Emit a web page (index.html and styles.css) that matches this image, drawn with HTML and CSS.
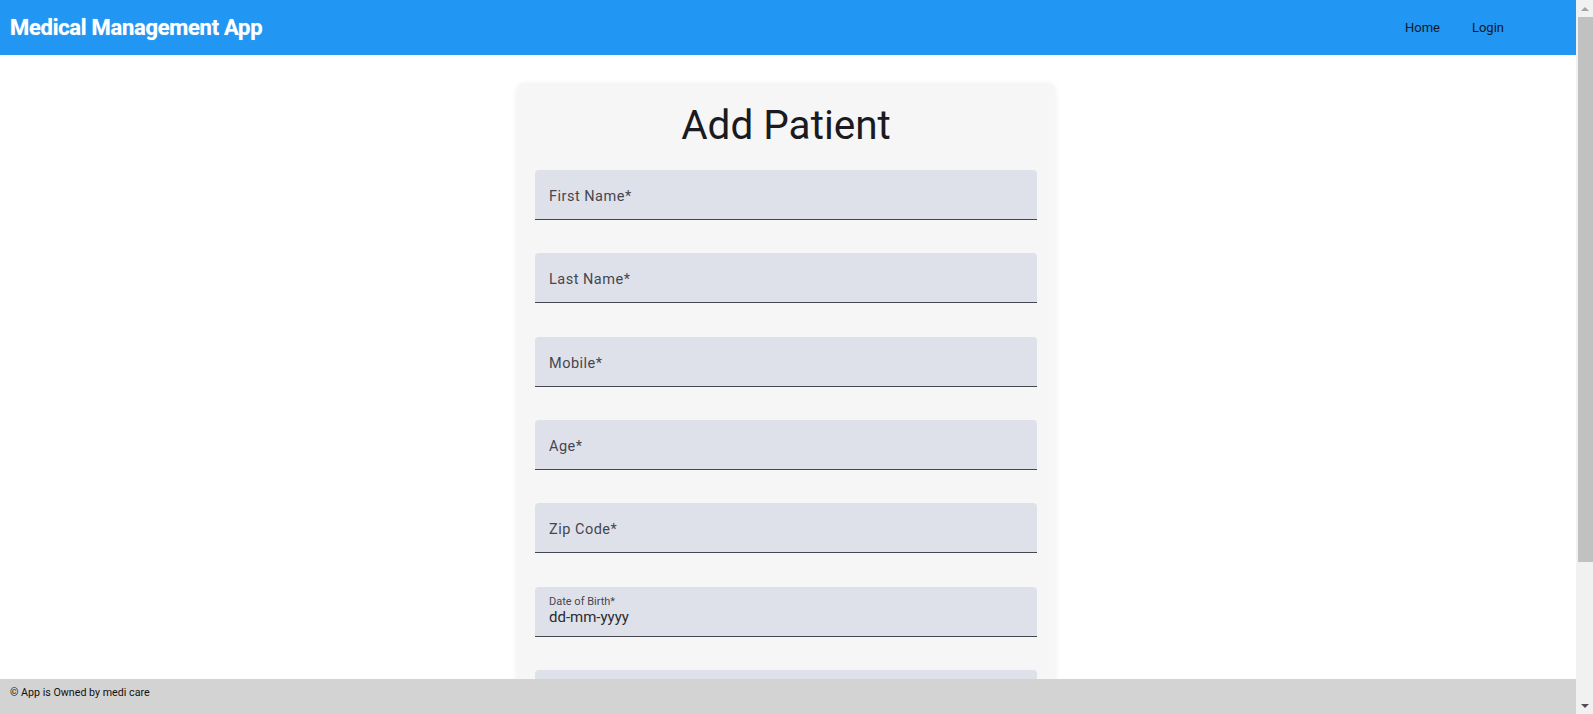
FILE: index.html
```html
<!DOCTYPE html>
<html lang="en">
<head>
<meta charset="utf-8">
<title>Medical Management App</title>
<link rel="stylesheet" href="styles.css">
</head>
<body>
<div class="app">
  <header class="topbar">
    <div class="brand">Medical Management App</div>
    <nav class="nav">
      <a class="nav-link" href="#">Home</a>
      <a class="nav-link" href="#">Login</a>
    </nav>
  </header>
  <main class="page">
    <section class="card">
      <h1 class="card-title">Add Patient</h1>
      <form class="form">
        <div class="field"><span class="field-label">First Name*</span></div>
        <div class="field"><span class="field-label">Last Name*</span></div>
        <div class="field"><span class="field-label">Mobile*</span></div>
        <div class="field"><span class="field-label">Age*</span></div>
        <div class="field"><span class="field-label">Zip Code*</span></div>
        <div class="field field-date">
          <span class="field-small">Date of Birth*</span>
          <span class="field-value">dd-mm-yyyy</span>
        </div>
        <div class="field"></div>
      </form>
    </section>
  </main>
  <footer class="footer">© App is Owned by medi care</footer>
</div>
<div class="scrollbar" aria-hidden="true">
  <div class="sb-arrow sb-up"></div>
  <div class="sb-track"><div class="sb-thumb"></div></div>
  <div class="sb-arrow sb-down"></div>
</div>
</body>
</html>
```
FILE: styles.css
```css
html, body {
  margin: 0;
  padding: 0;
}
body {
  font-family: Roboto, "Noto Sans", sans-serif;
  background: #ffffff;
  color: #1b1b1f;
}
.app {
  width: calc(100% - 17px);
}
.topbar {
  height: 55px;
  background: #2196f3;
  display: flex;
  align-items: center;
  justify-content: space-between;
  padding: 0 72px 0 10px;
}
.brand {
  font-size: 22px;
  font-weight: 700;
  color: #ffffff;
  letter-spacing: -0.3px;
  text-shadow: 0 0 1px rgba(255,255,255,0.6);
}
.nav {
  display: flex;
  gap: 32px;
  padding-bottom: 1px;
}
.nav-link {
  font-size: 13px;
  color: #111827;
  text-decoration: none;
}
.page {
  display: flex;
  justify-content: center;
  padding: 28px 0 120px;
}
.card {
  width: 538px;
  margin-right: 4px;
  box-sizing: border-box;
  padding: 18px 18px 30px;
  background: #f6f6f6;
  border-radius: 8px;
  box-shadow: 0 1px 6px rgba(0,0,0,0.08);
}
.card-title {
  margin: 0 0 21px;
  text-align: center;
  font-size: 40.5px;
  line-height: 48px;
  font-weight: 400;
  color: #1b1b1f;
}
.form {
  display: flex;
  flex-direction: column;
}
.field {
  height: 50px;
  box-sizing: border-box;
  background: #dfe1ea;
  border-radius: 4px 4px 0 0;
  border-bottom: 1px solid #44474e;
  padding: 4px 14px 0;
  display: flex;
  align-items: center;
  margin-bottom: 33.33px;
}
.field-label {
  font-size: 14.5px;
  letter-spacing: 0.5px;
  color: #45464f;
}
.field-date {
  flex-direction: column;
  align-items: flex-start;
  justify-content: center;
  gap: 0;
  padding-top: 0;
  padding-bottom: 2px;
}
.field-small {
  font-size: 11px;
  color: #45464f;
}
.field-value {
  font-size: 15px;
  color: #2a2b30;
}
.footer {
  position: fixed;
  left: 0;
  right: 17px;
  bottom: 0;
  height: 35px;
  box-sizing: border-box;
  padding: 5px 10px 0;
  background: #d3d3d3;
  font-size: 10.7px;
  line-height: 18px;
  color: #111;
}
.scrollbar {
  position: fixed;
  top: 0;
  right: 0;
  bottom: 0;
  width: 17px;
  background: #f1f1f1;
  display: flex;
  flex-direction: column;
}
.sb-arrow {
  height: 17px;
  display: flex;
  align-items: center;
  justify-content: center;
}
.sb-up::before {
  content: "";
  border-left: 4px solid transparent;
  border-right: 4px solid transparent;
  border-bottom: 4px solid #a3a3a3;
}
.sb-down::before {
  content: "";
  border-left: 4px solid transparent;
  border-right: 4px solid transparent;
  border-top: 4px solid #505050;
}
.sb-track {
  flex: 1;
  padding-left: 2px;
}
.sb-thumb {
  height: 545px;
  background: #c1c1c1;
}
```
